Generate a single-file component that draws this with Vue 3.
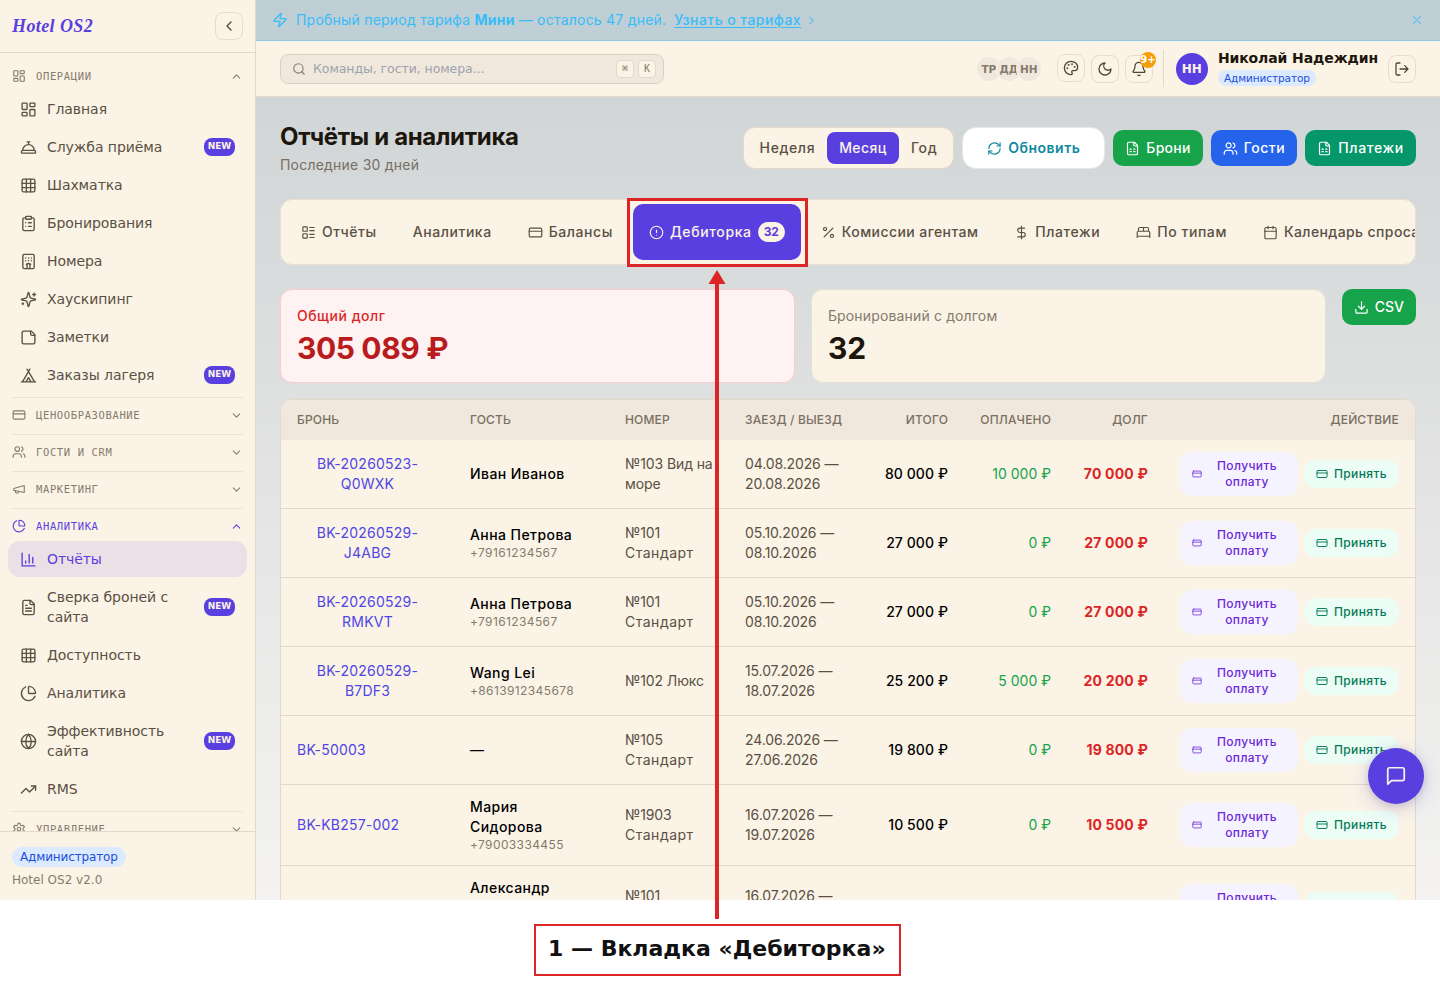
<template>
  <div class="shot">
    <div class="app">
      <aside class="sidebar">
        <div class="brand-row">
          <span class="brand">Hotel OS2</span>
          <button class="icon-btn"><Icon name="chevronLeft" :size="16" /></button>
        </div>

        <nav class="nav">
          <section v-for="group in navGroups" :key="group.title" class="nav-group">
            <div class="nav-head" :class="{ current: group.current }">
              <Icon :name="group.icon" :size="14" />
              <span class="nav-title">{{ group.title }}</span>
              <Icon :name="group.items ? 'chevronUp' : 'chevronDown'" :size="13" />
            </div>
            <div v-if="group.items" class="nav-items">
              <a
                v-for="item in group.items"
                :key="item.label"
                class="nav-item"
                :class="{ active: item.active }"
              >
                <Icon :name="item.icon" :size="17" />
                <span class="nav-label">{{ item.label }}</span>
                <span v-if="item.isNew" class="badge-new">NEW</span>
              </a>
            </div>
          </section>
        </nav>

        <div class="sidebar-foot">
          <span class="role-pill">Администратор</span>
          <div class="version">Hotel OS2 v2.0</div>
        </div>
      </aside>

      <div class="main">
        <div class="trial">
          <Icon name="zap" :size="16" />
          <span class="trial-text">Пробный период тарифа <b>Мини</b> — осталось 47 дней.</span>
          <a class="trial-link">Узнать о тарифах</a>
          <Icon name="chevronRight" :size="13" />
          <Icon name="x" :size="14" class="trial-close" />
        </div>

        <header class="topbar">
          <div class="search">
            <Icon name="search" :size="14" />
            <span class="search-text">Команды, гости, номера...</span>
            <kbd>⌘</kbd>
            <kbd>K</kbd>
          </div>
          <div class="presence">
            <span v-for="p in presence" :key="p" class="presence-dot">{{ p }}</span>
          </div>
          <button class="icon-btn raised"><Icon name="palette" :size="16" /></button>
          <button class="icon-btn"><Icon name="moon" :size="16" /></button>
          <button class="icon-btn bell">
            <Icon name="bell" :size="16" />
            <span class="bell-count">9+</span>
          </button>
          <div class="user">
            <span class="avatar">НН</span>
            <div class="user-info">
              <div class="user-name">Николай Надеждин</div>
              <span class="user-role">Администратор</span>
            </div>
          </div>
          <button class="icon-btn"><Icon name="logout" :size="16" /></button>
        </header>

        <div class="content">
          <div class="page-head">
            <div class="page-titles">
              <h1>Отчёты и аналитика</h1>
              <p>Последние 30 дней</p>
            </div>
            <div class="segment">
              <button
                v-for="p in periods"
                :key="p"
                :class="{ on: p === period }"
                @click="period = p"
              >{{ p }}</button>
            </div>
            <button class="btn refresh"><Icon name="refresh" :size="15" />Обновить</button>
            <button class="btn green"><Icon name="sheet" :size="15" />Брони</button>
            <button class="btn blue"><Icon name="users" :size="15" />Гости</button>
            <button class="btn teal"><Icon name="sheet" :size="15" />Платежи</button>
          </div>

          <div class="tabs">
            <button
              v-for="tab in tabs"
              :key="tab.label"
              class="tab"
              :class="{ active: tab.label === activeTab }"
              @click="activeTab = tab.label"
            >
              <Icon v-if="tab.icon" :name="tab.icon" :size="15" />
              <span>{{ tab.label }}</span>
              <span v-if="tab.count" class="tab-count">{{ tab.count }}</span>
            </button>
          </div>

          <div class="stats">
            <div class="stat debt">
              <div class="stat-label">Общий долг</div>
              <div class="stat-value">305 089 ₽</div>
            </div>
            <div class="stat">
              <div class="stat-label">Бронирований с долгом</div>
              <div class="stat-value">32</div>
            </div>
            <button class="btn green csv"><Icon name="download" :size="15" />CSV</button>
          </div>

          <div class="table-card">
            <table>
              <colgroup>
                <col class="c-booking" />
                <col class="c-guest" />
                <col class="c-room" />
                <col class="c-dates" />
                <col class="c-total" />
                <col class="c-paid" />
                <col class="c-debt" />
                <col />
              </colgroup>
              <thead>
                <tr>
                  <th>Бронь</th>
                  <th>Гость</th>
                  <th>Номер</th>
                  <th>Заезд / Выезд</th>
                  <th class="num">Итого</th>
                  <th class="num">Оплачено</th>
                  <th class="num">Долг</th>
                  <th class="num">Действие</th>
                </tr>
              </thead>
              <tbody>
                <tr v-for="(row, i) in rows" :key="i">
                  <td><button class="booking">{{ row.id }}</button></td>
                  <td>
                    <div v-for="(part, n) in row.guest" :key="n" class="guest">{{ part }}</div>
                    <div v-if="row.phone !== undefined" class="phone">{{ row.phone }}</div>
                  </td>
                  <td class="soft room">
                    {{ row.room }} <span :class="{ standard: row.type === 'Стандарт' }">{{ row.type }}</span>
                  </td>
                  <td class="soft dates">{{ row.from }} — {{ row.to }}</td>
                  <td class="num total">{{ row.total }}</td>
                  <td class="num paid">{{ row.paid }}</td>
                  <td class="num owed">{{ row.debt }}</td>
                  <td>
                    <div class="actions">
                      <button class="act get"><Icon name="card" :size="10" /><span>Получить оплату</span></button>
                      <button class="act take"><Icon name="card" :size="12" /><span>Принять</span></button>
                    </div>
                  </td>
                </tr>
              </tbody>
            </table>
          </div>
        </div>
      </div>

      <button class="chat"><Icon name="message" :size="22" /></button>
    </div>

    <!-- callout over the tab -->
    <div class="mark-frame"></div>
    <svg class="mark-arrow" width="18" height="650" viewBox="0 0 18 650">
      <path d="M9 13V649" />
      <polygon points="9,0 17.5,14 0.5,14" />
    </svg>
    <div class="mark-label">1 — Вкладка «Дебиторка»</div>
  </div>
</template>

<script setup>
import { ref, h } from 'vue'

const FILE = '<path d="M15 2H6a2 2 0 0 0-2 2v16a2 2 0 0 0 2 2h12a2 2 0 0 0 2-2V7Z"/><path d="M14 2v4a2 2 0 0 0 2 2h4"/>'

const ICONS = {
  chevronLeft: '<path d="m15 18-6-6 6-6"/>',
  chevronRight: '<path d="m9 18 6-6-6-6"/>',
  chevronUp: '<path d="m18 15-6-6-6 6"/>',
  chevronDown: '<path d="m6 9 6 6 6-6"/>',
  x: '<path d="M18 6 6 18M6 6l12 12"/>',
  dashboard: '<rect width="7" height="9" x="3" y="3" rx="1"/><rect width="7" height="5" x="14" y="3" rx="1"/><rect width="7" height="9" x="14" y="12" rx="1"/><rect width="7" height="5" x="3" y="16" rx="1"/>',
  concierge: '<path d="M3 20a1 1 0 0 1-1-1v-1a2 2 0 0 1 2-2h16a2 2 0 0 1 2 2v1a1 1 0 0 1-1 1Z"/><path d="M20 16a8 8 0 1 0-16 0M12 4v4M10 4h4"/>',
  grid: '<rect width="18" height="18" x="3" y="3" rx="2"/><path d="M3 9h18M3 15h18M9 3v18M15 3v18"/>',
  clipboard: '<rect width="8" height="4" x="8" y="2" rx="1"/><path d="M16 4h2a2 2 0 0 1 2 2v14a2 2 0 0 1-2 2H6a2 2 0 0 1-2-2V6a2 2 0 0 1 2-2h2M12 11h4M12 16h4M8 11h.01M8 16h.01"/>',
  hotel: '<rect width="16" height="20" x="4" y="2" rx="2"/><path d="M10 22v-6.57M12 11h.01M12 7h.01M14 15.43V22M15 16a5 5 0 0 0-6 0M16 11h.01M16 7h.01M8 11h.01M8 7h.01"/>',
  sparkles: '<path d="M9.937 15.5A2 2 0 0 0 8.5 14.063l-6.135-1.582a.5.5 0 0 1 0-.962L8.5 9.936A2 2 0 0 0 9.937 8.5l1.582-6.135a.5.5 0 0 1 .963 0L14.063 8.5A2 2 0 0 0 15.5 9.937l6.135 1.581a.5.5 0 0 1 0 .964L15.5 14.063a2 2 0 0 0-1.437 1.437l-1.582 6.135a.5.5 0 0 1-.963 0z"/><path d="M20 3v4M22 5h-4M4 17v2M5 18H3"/>',
  note: '<path d="M16 3H5a2 2 0 0 0-2 2v14a2 2 0 0 0 2 2h14a2 2 0 0 0 2-2V8Z"/><path d="M15 3v4a2 2 0 0 0 2 2h4"/>',
  tent: '<path d="M3.5 21 14 3M20.5 21 10 3M15.5 21 12 15l-3.5 6M2 21h20"/>',
  card: '<rect width="20" height="14" x="2" y="5" rx="2"/><path d="M2 10h20"/>',
  users: '<path d="M16 21v-2a4 4 0 0 0-4-4H6a4 4 0 0 0-4 4v2"/><circle cx="9" cy="7" r="4"/><path d="M22 21v-2a4 4 0 0 0-3-3.87M16 3.13a4 4 0 0 1 0 7.75"/>',
  megaphone: '<path d="m3 11 18-5v12L3 14v-3z"/><path d="M11.6 16.8a3 3 0 1 1-5.8-1.6"/>',
  pie: '<path d="M21 12c.552 0 1.005-.449.95-.998a10 10 0 0 0-8.953-8.951c-.55-.055-.998.398-.998.95v8a1 1 0 0 0 1 1z"/><path d="M21.21 15.89A10 10 0 1 1 8 2.83"/>',
  bars: '<path d="M3 3v18h18M18 17V9M13 17V5M8 17v-3"/>',
  fileText: FILE + '<path d="M10 9H8M16 13H8M16 17H8"/>',
  sheet: FILE + '<path d="M8 13h2M14 13h2M8 17h2M14 17h2"/>',
  globe: '<circle cx="12" cy="12" r="10"/><path d="M12 2a14.5 14.5 0 0 0 0 20 14.5 14.5 0 0 0 0-20M2 12h20"/>',
  trend: '<path d="m22 7-8.5 8.5-5-5L2 17"/><path d="M16 7h6v6"/>',
  settings: '<path d="M12.22 2h-.44a2 2 0 0 0-2 2v.18a2 2 0 0 1-1 1.73l-.43.25a2 2 0 0 1-2 0l-.15-.08a2 2 0 0 0-2.73.73l-.22.38a2 2 0 0 0 .73 2.73l.15.1a2 2 0 0 1 1 1.72v.51a2 2 0 0 1-1 1.74l-.15.09a2 2 0 0 0-.73 2.73l.22.38a2 2 0 0 0 2.73.73l.15-.08a2 2 0 0 1 2 0l.43.25a2 2 0 0 1 1 1.73V20a2 2 0 0 0 2 2h.44a2 2 0 0 0 2-2v-.18a2 2 0 0 1 1-1.73l.43-.25a2 2 0 0 1 2 0l.15.08a2 2 0 0 0 2.73-.73l.22-.39a2 2 0 0 0-.73-2.73l-.15-.08a2 2 0 0 1-1-1.74v-.5a2 2 0 0 1 1-1.74l.15-.09a2 2 0 0 0 .73-2.73l-.22-.38a2 2 0 0 0-2.73-.73l-.15.08a2 2 0 0 1-2 0l-.43-.25a2 2 0 0 1-1-1.73V4a2 2 0 0 0-2-2z"/><circle cx="12" cy="12" r="3"/>',
  zap: '<path d="M4 14a1 1 0 0 1-.78-1.63l9.9-10.2a.5.5 0 0 1 .86.46l-1.92 6.02A1 1 0 0 0 13 10h7a1 1 0 0 1 .78 1.63l-9.9 10.2a.5.5 0 0 1-.86-.46l1.92-6.02A1 1 0 0 0 11 14z"/>',
  search: '<circle cx="11" cy="11" r="8"/><path d="m21 21-4.3-4.3"/>',
  palette: '<path d="M12 22a1 1 0 0 1 0-20 10 9 0 0 1 10 9 5 5 0 0 1-5 5h-2.25a1.75 1.75 0 0 0-1.4 2.8l.3.4a1.75 1.75 0 0 1-1.4 2.8z"/><circle cx="13.5" cy="6.5" r=".5"/><circle cx="17.5" cy="10.5" r=".5"/><circle cx="6.5" cy="12.5" r=".5"/><circle cx="8.5" cy="7.5" r=".5"/>',
  moon: '<path d="M12 3a6 6 0 0 0 9 9 9 9 0 1 1-9-9Z"/>',
  bell: '<path d="M10.268 21a2 2 0 0 0 3.464 0"/><path d="M3.262 15.326A1 1 0 0 0 4 17h16a1 1 0 0 0 .74-1.673C19.41 13.956 18 12.499 18 8A6 6 0 0 0 6 8c0 4.499-1.411 5.956-2.738 7.326"/>',
  logout: '<path d="M9 21H5a2 2 0 0 1-2-2V5a2 2 0 0 1 2-2h4"/><path d="m16 17 5-5-5-5M21 12H9"/>',
  refresh: '<path d="M3 12a9 9 0 0 1 9-9 9.75 9.75 0 0 1 6.74 2.74L21 8"/><path d="M21 3v5h-5"/><path d="M21 12a9 9 0 0 1-9 9 9.75 9.75 0 0 1-6.74-2.74L3 16"/><path d="M8 16H3v5"/>',
  list: '<rect width="7" height="7" x="3" y="3" rx="1"/><rect width="7" height="7" x="3" y="14" rx="1"/><path d="M14 4h7M14 9h7M14 15h7M14 20h7"/>',
  alert: '<circle cx="12" cy="12" r="10"/><path d="M12 8v4M12 16h.01"/>',
  percent: '<path d="M19 5 5 19"/><circle cx="6.5" cy="6.5" r="2.5"/><circle cx="17.5" cy="17.5" r="2.5"/>',
  dollar: '<path d="M12 2v20M17 5H9.5a3.5 3.5 0 0 0 0 7h5a3.5 3.5 0 0 1 0 7H6"/>',
  bed: '<path d="M2 20v-8a2 2 0 0 1 2-2h16a2 2 0 0 1 2 2v8M4 10V6a2 2 0 0 1 2-2h12a2 2 0 0 1 2 2v4M12 4v6M2 18h20"/>',
  calendar: '<path d="M8 2v4M16 2v4"/><rect width="18" height="18" x="3" y="4" rx="2"/><path d="M3 10h18"/>',
  download: '<path d="M21 15v4a2 2 0 0 1-2 2H5a2 2 0 0 1-2-2v-4M7 10l5 5 5-5M12 15V3"/>',
  message: '<path d="M21 15a2 2 0 0 1-2 2H7l-4 4V5a2 2 0 0 1 2-2h14a2 2 0 0 1 2 2z"/>',
}

// Stroke icon on a 24px grid
const Icon = (props) => h('svg', {
  width: props.size,
  height: props.size,
  viewBox: '0 0 24 24',
  fill: 'none',
  stroke: 'currentColor',
  'stroke-width': 1.9,
  'stroke-linecap': 'round',
  'stroke-linejoin': 'round',
  class: 'icon',
  innerHTML: ICONS[props.name],
})
Icon.props = ['name', 'size']

const navGroups = [
  {
    title: 'ОПЕРАЦИИ',
    icon: 'dashboard',
    items: [
      { label: 'Главная', icon: 'dashboard' },
      { label: 'Служба приёма', icon: 'concierge', isNew: true },
      { label: 'Шахматка', icon: 'grid' },
      { label: 'Бронирования', icon: 'clipboard' },
      { label: 'Номера', icon: 'hotel' },
      { label: 'Хаускипинг', icon: 'sparkles' },
      { label: 'Заметки', icon: 'note' },
      { label: 'Заказы лагеря', icon: 'tent', isNew: true },
    ],
  },
  { title: 'ЦЕНООБРАЗОВАНИЕ', icon: 'card' },
  { title: 'ГОСТИ И CRM', icon: 'users' },
  { title: 'МАРКЕТИНГ', icon: 'megaphone' },
  {
    title: 'АНАЛИТИКА',
    icon: 'pie',
    current: true,
    items: [
      { label: 'Отчёты', icon: 'bars', active: true },
      { label: 'Сверка броней с сайта', icon: 'fileText', isNew: true },
      { label: 'Доступность', icon: 'grid' },
      { label: 'Аналитика', icon: 'pie' },
      { label: 'Эффективность сайта', icon: 'globe', isNew: true },
      { label: 'RMS', icon: 'trend' },
    ],
  },
  { title: 'УПРАВЛЕНИЕ', icon: 'settings' },
]

const presence = ['ТР', 'ДД', 'НН']

const periods = ['Неделя', 'Месяц', 'Год']
const period = ref('Месяц')

const tabs = [
  { label: 'Отчёты', icon: 'list' },
  { label: 'Аналитика' },
  { label: 'Балансы', icon: 'card' },
  { label: 'Дебиторка', icon: 'alert', count: 32 },
  { label: 'Комиссии агентам', icon: 'percent' },
  { label: 'Платежи', icon: 'dollar' },
  { label: 'По типам', icon: 'bed' },
  { label: 'Календарь спроса', icon: 'calendar' },
]
const activeTab = ref('Дебиторка')

const rows = [
  { id: 'BK-20260523-Q0WXK', guest: ['Иван Иванов'], room: '№103', type: 'Вид на море', from: '04.08.2026', to: '20.08.2026', total: '80 000 ₽', paid: '10 000 ₽', debt: '70 000 ₽' },
  { id: 'BK-20260529-J4ABG', guest: ['Анна Петрова'], phone: '+79161234567', room: '№101', type: 'Стандарт', from: '05.10.2026', to: '08.10.2026', total: '27 000 ₽', paid: '0 ₽', debt: '27 000 ₽' },
  { id: 'BK-20260529-RMKVT', guest: ['Анна Петрова'], phone: '+79161234567', room: '№101', type: 'Стандарт', from: '05.10.2026', to: '08.10.2026', total: '27 000 ₽', paid: '0 ₽', debt: '27 000 ₽' },
  { id: 'BK-20260529-B7DF3', guest: ['Wang Lei'], phone: '+8613912345678', room: '№102', type: 'Люкс', from: '15.07.2026', to: '18.07.2026', total: '25 200 ₽', paid: '5 000 ₽', debt: '20 200 ₽' },
  { id: 'BK-50003', guest: ['—'], room: '№105', type: 'Стандарт', from: '24.06.2026', to: '27.06.2026', total: '19 800 ₽', paid: '0 ₽', debt: '19 800 ₽' },
  { id: 'BK-KB257-002', guest: ['Мария', 'Сидорова'], phone: '+79003334455', room: '№1903', type: 'Стандарт', from: '16.07.2026', to: '19.07.2026', total: '10 500 ₽', paid: '0 ₽', debt: '10 500 ₽' },
  { id: '', guest: ['Александр', ''], phone: '', room: '№101', type: 'Стандарт', from: '16.07.2026', to: '19.07.2026', total: '', paid: '', debt: '' },
]
</script>

<style>
body {
  margin: 0;
  background: #fff;
}
</style>

<style scoped>
.shot {
  position: relative;
  width: 1440px;
  height: 999px;
  overflow: hidden;
  background: #fff;
}

.app {
  position: relative;
  display: flex;
  height: 900px;
  overflow: hidden;
  background: linear-gradient(180deg, #cdd2d5 0%, #d4d8d9 20%, #dfe1e0 45%, #ebebea 75%, #f4f3f2 100%);
  font-family: Inter, sans-serif;
  font-size: 14px;
  line-height: 20px;
  color: #1c160c;
}

button {
  font: inherit;
  color: inherit;
  letter-spacing: inherit;
  border: 0;
  padding: 0;
  background: none;
  cursor: pointer;
}

.icon {
  flex-shrink: 0;
  display: block;
}

/* Sidebar */
.sidebar {
  width: 256px;
  flex-shrink: 0;
  box-sizing: border-box;
  display: flex;
  flex-direction: column;
  background: #faf3e6;
  border-right: 1px solid #e2d9cb;
  font-family: "DejaVu Sans", sans-serif;
  color: #5a5043;
}

.brand-row {
  height: 52px;
  flex-shrink: 0;
  display: flex;
  align-items: center;
  justify-content: space-between;
  padding: 0 12px;
  border-bottom: 1px solid #e2d9cb;
}

.brand {
  font: italic 700 18px/28px "Liberation Serif", serif;
  letter-spacing: 0.4px;
  color: #5a3fe0;
}

.icon-btn {
  position: relative;
  width: 28px;
  height: 28px;
  box-sizing: border-box;
  display: flex;
  align-items: center;
  justify-content: center;
  border: 1px solid #e5dccf;
  border-radius: 8px;
  color: #4d4437;
}

.nav {
  flex: 1;
  min-height: 0;
  overflow: hidden;
  padding-top: 8px;
}

.nav-group + .nav-group::before {
  content: "";
  display: block;
  height: 1px;
  margin: 4px 12px 2px;
  background: #eae1d4;
}

.nav-head {
  height: 30px;
  display: flex;
  align-items: center;
  gap: 10px;
  padding: 0 12px;
  color: #857b6d;
}

.nav-head.current {
  color: #5a3fe0;
}

.nav-title {
  flex: 1;
  font: 10.5px/16px "DejaVu Sans Mono", monospace;
  letter-spacing: 0.63px;
}

.nav-items {
  display: flex;
  flex-direction: column;
  gap: 2px;
  padding: 0 8px;
}

.nav-item {
  display: flex;
  align-items: center;
  gap: 10px;
  padding: 8px 12px;
  border-radius: 12px;
}

.nav-item.active {
  background: #eae0e5;
  color: #5a3fe0;
}

.nav-label {
  flex: 1;
  letter-spacing: -0.07px;
}

.badge-new {
  width: 31px;
  height: 18px;
  border-radius: 8px;
  background: #5a3fe0;
  color: #fbf3e4;
  font-size: 9px;
  font-weight: 700;
  line-height: 16px;
  text-align: center;
}

.sidebar-foot {
  height: 69px;
  flex-shrink: 0;
  padding: 15px 12px 0;
  box-sizing: border-box;
  border-top: 1px solid #e2d9cb;
  font-size: 12px;
  line-height: 16px;
}

.role-pill {
  display: inline-block;
  padding: 2px 8px;
  border-radius: 10px;
  background: #dbeafe;
  color: #1d4ed8;
  letter-spacing: -0.13px;
}

.version {
  margin-top: 5px;
  color: #857b6d;
}

/* Right side */
.main {
  flex: 1;
  min-width: 0;
  display: flex;
  flex-direction: column;
}

.trial {
  height: 40px;
  flex-shrink: 0;
  display: flex;
  align-items: center;
  padding: 0 16px;
  border-bottom: 1px solid #8fc9e2;
  background: rgba(125, 190, 215, 0.18);
  color: #38bdf8;
}

.trial-text {
  margin: 0 8px;
  letter-spacing: 0.22px;
}

.trial-link {
  margin-right: 4px;
  font-weight: 500;
  letter-spacing: 0.44px;
  text-decoration: underline;
  text-underline-offset: 2px;
}

.trial-close {
  margin-left: auto;
  opacity: 0.7;
}

.topbar {
  height: 55px;
  flex-shrink: 0;
  display: flex;
  align-items: center;
  gap: 6px;
  padding: 0 24px;
  border-bottom: 1px solid #e2d9cb;
  background: #faf3e6;
  font-family: "DejaVu Sans", sans-serif;
}

.search {
  width: 384px;
  height: 30px;
  box-sizing: border-box;
  display: flex;
  align-items: center;
  padding: 0 7px 0 11px;
  border: 1px solid #d9d0c3;
  border-radius: 8px;
  background: #f0e8dc;
  color: #857b6d;
}

.search-text {
  flex: 1;
  margin-left: 7px;
  font-size: 12.5px;
  letter-spacing: -0.07px;
  color: #9ca3af;
}

kbd {
  width: 18px;
  height: 18px;
  box-sizing: border-box;
  margin-left: 4px;
  border: 1px solid #e2d9cb;
  border-radius: 4px;
  background: #faf3e6;
  font: 10px/15px "DejaVu Sans Mono", monospace;
  text-align: center;
}

.presence {
  display: flex;
  margin-left: auto;
  margin-right: 10px;
}

.presence-dot {
  width: 24px;
  height: 24px;
  border-radius: 50%;
  background: #f0e8dc;
  box-shadow: 0 0 0 1px #faf3e6;
  color: #857b6d;
  font-size: 10.5px;
  font-weight: 700;
  line-height: 24px;
  text-align: center;
}

.presence-dot + .presence-dot {
  margin-left: -4px;
}

.raised {
  margin-bottom: 2px;
}

.bell-count {
  position: absolute;
  top: -4px;
  right: -4px;
  width: 16px;
  height: 16px;
  border-radius: 50%;
  background: #f59e0b;
  color: #fff;
  font-size: 10px;
  font-weight: 700;
  line-height: 15px;
  text-align: center;
}

.user {
  height: 37px;
  display: flex;
  align-items: center;
  margin-left: 4px;
  padding-left: 12px;
  padding-right: 4px;
  border-left: 1px solid #e2d9cb;
}

.avatar {
  width: 32px;
  height: 32px;
  margin-right: 10px;
  border-radius: 50%;
  background: #5a3fe0;
  color: #faf3e6;
  font-size: 12px;
  font-weight: 700;
  line-height: 32px;
  text-align: center;
}

.user-info {
  padding-bottom: 2px;
}

.user-name {
  font-size: 14px;
  font-weight: 700;
  line-height: 18px;
  letter-spacing: -0.1px;
}

.user-role {
  display: block;
  width: max-content;
  margin-top: 3px;
  padding: 0 6px;
  border-radius: 8px;
  background: #dbeafe;
  color: #1d4ed8;
  font-size: 10.5px;
  line-height: 16px;
  letter-spacing: -0.08px;
}

.content {
  padding: 24px 24px 0;
}

.page-head {
  height: 54px;
  display: flex;
  align-items: center;
  gap: 8px;
}

.page-titles {
  margin-right: auto;
}

h1 {
  margin: 0;
  font-size: 24px;
  font-weight: 700;
  line-height: 32px;
  letter-spacing: -0.34px;
}

p {
  margin: 2px 0 0;
  letter-spacing: 0.22px;
  color: #786f62;
}

.segment {
  height: 42px;
  box-sizing: border-box;
  display: flex;
  padding: 4px;
  border: 1px solid #e2d9cb;
  border-radius: 12px;
  background: #faf3e6;
}

.segment button {
  padding: 0 12px;
  border-radius: 8px;
  font-weight: 500;
  letter-spacing: 0.6px;
  color: #5a5043;
}

.segment .on {
  background: #5a3fe0;
  color: #faf3e6;
  letter-spacing: 0.45px;
}

.btn {
  height: 36px;
  display: flex;
  align-items: center;
  gap: 6px;
  padding: 0 12px;
  border-radius: 10px;
  color: #fff;
  font-weight: 500;
  letter-spacing: 0.28px;
}

.refresh {
  height: 42px;
  box-sizing: border-box;
  padding: 0 24px;
  border: 1px solid #e5e7eb;
  border-radius: 14px;
  background: #fff;
  color: #0e8a9f;
  font-weight: 600;
  letter-spacing: 0.5px;
}

.green {
  background: #16a34a;
}

.blue {
  background: #2563eb;
  letter-spacing: 0.5px;
}

.teal {
  background: #059669;
  letter-spacing: 0.7px;
}

.csv {
  letter-spacing: 0;
}

.tabs {
  height: 66px;
  box-sizing: border-box;
  display: flex;
  gap: 4px;
  margin-top: 24px;
  padding: 4px;
  overflow: hidden;
  border: 1px solid #e8dfd0;
  border-radius: 12px;
  background: #faf3e6;
}

.tab {
  flex-shrink: 0;
  display: flex;
  align-items: center;
  gap: 6px;
  padding: 0 16px;
  border-radius: 10px;
  color: #5a5043;
  font-weight: 500;
  letter-spacing: 0.56px;
  white-space: nowrap;
}

.tab:nth-child(5) {
  letter-spacing: 0.42px;
}

.tab:last-child {
  letter-spacing: 0.4px;
}

.tab.active {
  background: #5a3fe0;
  color: #faf3e6;
  letter-spacing: 0.64px;
}

.tab-count {
  padding: 0 6px;
  border-radius: 10px;
  background: #faf3e6;
  color: #5a3fe0;
  font-size: 12px;
  font-weight: 700;
  letter-spacing: -0.1px;
}

.stats {
  display: flex;
  align-items: flex-start;
  gap: 16px;
  margin-top: 24px;
}

.stat {
  flex: 1;
  height: 94px;
  box-sizing: border-box;
  padding: 16px;
  border: 1px solid #e8dfd0;
  border-radius: 12px;
  background: #faf3e6;
}

.stat-label {
  letter-spacing: 0.15px;
  color: #857b6d;
}

.stat-value {
  margin-top: 4px;
  font-size: 30px;
  font-weight: 700;
  line-height: 36px;
}

.stat.debt {
  border-color: #fecaca;
  background: #fef2f2;
}

.debt .stat-label {
  letter-spacing: 0.5px;
  color: #dc2626;
  font-weight: 500;
}

.debt .stat-value {
  letter-spacing: -0.38px;
  color: #b91c1c;
}

.table-card {
  margin-top: 16px;
  overflow: hidden;
  border: 1px solid #e2d9cb;
  border-radius: 12px;
  background: #faf3e6;
}

table {
  width: 100%;
  table-layout: fixed;
  border-collapse: separate;
  border-spacing: 0;
}

.c-booking { width: 173px; }
.c-guest { width: 155px; }
.c-room { width: 120px; }
.c-dates { width: 129px; }
.c-total { width: 106px; }
.c-paid { width: 103px; }
.c-debt { width: 97px; }

th {
  padding: 12px 16px;
  background: #f0e8dc;
  color: #786f62;
  font-size: 12px;
  font-weight: 500;
  line-height: 16px;
  letter-spacing: 0.16px;
  text-align: left;
  text-transform: uppercase;
  white-space: nowrap;
}

td {
  padding: 12px 16px;
  border-bottom: 1px solid #e2d9cb;
  vertical-align: middle;
}

.num {
  text-align: right;
  white-space: nowrap;
}

.booking {
  color: #4f46e5;
  letter-spacing: 0.22px;
  text-align: center;
}

.guest {
  min-height: 20px;
  color: #000;
  font-weight: 500;
  letter-spacing: 0.43px;
}

.phone {
  min-height: 16px;
  color: #857b6d;
  font-size: 12px;
  line-height: 16px;
  letter-spacing: 0.38px;
}

.soft {
  color: #5a5043;
}

.room {
  padding-right: 10px;
  letter-spacing: -0.1px;
}

.standard {
  letter-spacing: 0.5px;
}

.dates {
  letter-spacing: -0.12px;
}

.total {
  color: #000;
  font-weight: 500;
  letter-spacing: 0.08px;
}

.paid {
  color: #16a34a;
}

.owed {
  color: #dc2626;
  font-weight: 700;
  letter-spacing: 0.18px;
}

.actions {
  display: flex;
  align-items: center;
  justify-content: flex-end;
  gap: 6px;
}

.act {
  display: flex;
  align-items: center;
  gap: 6px;
  padding: 6px 12px;
  border-radius: 12px;
  font-size: 12px;
  font-weight: 500;
  line-height: 16px;
  letter-spacing: 0.4px;
}

.act.get {
  width: 118px;
  background: #f5f3ff;
  color: #6d28d9;
}

.act.get span {
  flex: 1;
}

.act.take {
  background: #ecfdf5;
  color: #047857;
}

.chat {
  position: absolute;
  right: 16px;
  bottom: 96px;
  width: 56px;
  height: 56px;
  display: flex;
  align-items: center;
  justify-content: center;
  border-radius: 50%;
  background: #5a3fe0;
  color: #faf3e6;
  box-shadow: 0 4px 20px rgba(90, 63, 224, 0.2), 0 2px 8px rgba(0, 0, 0, 0.15);
}

/* Callout */
.mark-frame {
  position: absolute;
  left: 627px;
  top: 198px;
  width: 181px;
  height: 69px;
  box-sizing: border-box;
  border: 3px solid #dc2626;
}

.mark-arrow {
  position: absolute;
  left: 708px;
  top: 270px;
}

.mark-arrow path {
  stroke: #dc2626;
  stroke-width: 4;
}

.mark-arrow polygon {
  fill: #dc2626;
}

.mark-label {
  position: absolute;
  left: 534px;
  top: 924px;
  width: 367px;
  height: 52px;
  box-sizing: border-box;
  padding-left: 12px;
  border: 2px solid #dc2626;
  background: #fff;
  color: #111;
  font: 700 22px/45px "DejaVu Sans", sans-serif;
  white-space: nowrap;
}
</style>
